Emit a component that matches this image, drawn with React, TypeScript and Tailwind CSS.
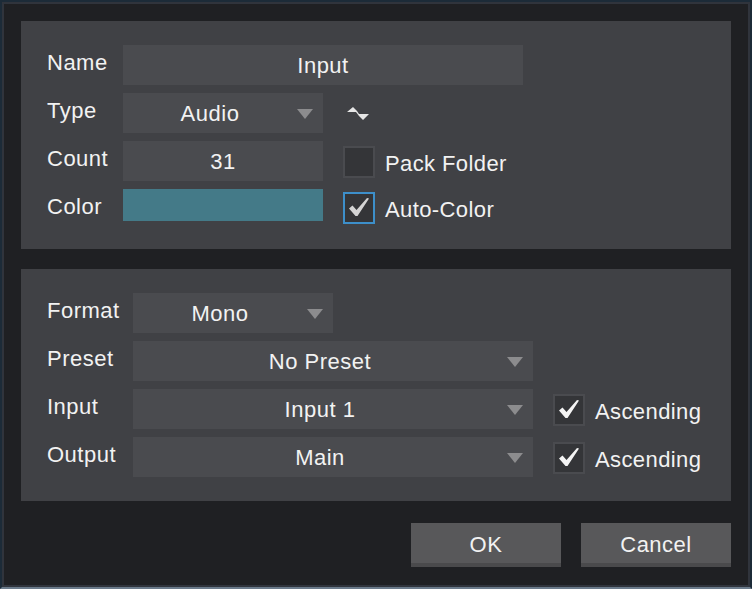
import React from "react";

const font = "font-['Liberation_Sans',Arial,sans-serif]";

function Caret() {
	return (
		<div className="absolute right-[10px] top-[16px] w-0 h-0 border-l-[8px] border-r-[8px] border-t-[10px] border-l-transparent border-r-transparent border-t-[#8c8c8e]" />
	);
}

function Field({ value, width, caret }: { value: string; width: string; caret?: boolean }) {
	return (
		<div className={`relative h-10 ${width} bg-[#4a4b4f] flex items-center justify-center text-[22px] tracking-[0.5px] text-[#f2f2f2] pt-[1px] ${caret ? "pr-[26px]" : ""}`}>
			{value}
			{caret && <Caret />}
		</div>
	);
}

function Label({ text, width }: { text: string; width: string }) {
	return <div className={`${width} h-10 text-[22px] tracking-[0.5px] leading-[36px] text-[#f2f2f2]`}>{text}</div>;
}

function Check({ checked, active, label }: { checked?: boolean; active?: boolean; label: string }) {
	return (
		<div className="flex items-center gap-[10px]">
			<div className={`w-8 h-8 border-2 bg-[#343538] ${active ? "border-[#3d8fca]" : "border-[#4a4b4f]"}`}>
				{checked && (
					<svg width="28" height="28" viewBox="0 0 28 28">
						<path d="M4 14.5 L7.5 11.5 L11.5 16 L22 4 L24 4.5 L12.5 22 L10.5 22 Z" fill={active ? "#d4d4d4" : "#f4f4f4"} />
					</svg>
				)}
			</div>
			<span className="pt-[4px] text-[22px] tracking-[0.4px] text-[#f2f2f2]">{label}</span>
		</div>
	);
}

export default function App() {
	return (
		<div className={`w-[752px] h-[589px] overflow-hidden border-2 border-[#1c2b38] border-b-[#6b7b8b] ${font}`}>
			<div className="h-full bg-[#1f2023] border-2 border-[#30343c] px-[17px] pt-[17px]">
				<section className="h-[228px] bg-[#404145] pt-[24px] pl-[26px] flex flex-col gap-2">
					<div className="flex">
						<Label text="Name" width="w-[76px]" />
						<Field value="Input" width="w-[400px]" />
					</div>
					<div className="flex">
						<Label text="Type" width="w-[76px]" />
						<Field value="Audio" width="w-[200px]" caret />
						<div className="ml-[23px] h-10 flex items-center">
							<svg width="24" height="14" viewBox="0 0 24 14">
								<path d="M1 6 L7 1 L11 5 L13 8 L23 8 L17 14 L13 10 L10 6 Z" fill="#e6e6e6" />
							</svg>
						</div>
					</div>
					<div className="flex">
						<Label text="Count" width="w-[76px]" />
						<Field value="31" width="w-[200px]" />
						<div className="ml-[20px] pt-[2px]">
							<Check label="Pack Folder" />
						</div>
					</div>
					<div className="flex">
						<Label text="Color" width="w-[76px]" />
						<div className="w-[200px] h-8 bg-[#447a88]" />
						<div className="ml-[20px]">
							<Check label="Auto-Color" checked active />
						</div>
					</div>
				</section>
				<section className="mt-[20px] h-[232px] bg-[#404145] pt-[24px] pl-[26px] flex flex-col gap-2">
					<div className="flex">
						<Label text="Format" width="w-[86px]" />
						<Field value="Mono" width="w-[200px]" caret />
					</div>
					<div className="flex">
						<Label text="Preset" width="w-[86px]" />
						<Field value="No Preset" width="w-[400px]" caret />
					</div>
					<div className="flex">
						<Label text="Input" width="w-[86px]" />
						<Field value="Input 1" width="w-[400px]" caret />
						<div className="ml-[20px] pt-[2px]">
							<Check label="Ascending" checked />
						</div>
					</div>
					<div className="flex">
						<Label text="Output" width="w-[86px]" />
						<Field value="Main" width="w-[400px]" caret />
						<div className="ml-[20px] pt-[2px]">
							<Check label="Ascending" checked />
						</div>
					</div>
				</section>
				<div className="mt-[22px] flex justify-end gap-[20px]">
					<button className="w-[150px] h-[44px] pt-[2px] bg-[#58585a] border-b-4 border-[#4a4a4c] text-[22px] tracking-[0.5px] text-[#f2f2f2]">OK</button>
					<button className="w-[150px] h-[44px] pt-[2px] bg-[#58585a] border-b-4 border-[#4a4a4c] text-[22px] tracking-[0.5px] text-[#f2f2f2]">Cancel</button>
				</div>
			</div>
		</div>
	);
}
